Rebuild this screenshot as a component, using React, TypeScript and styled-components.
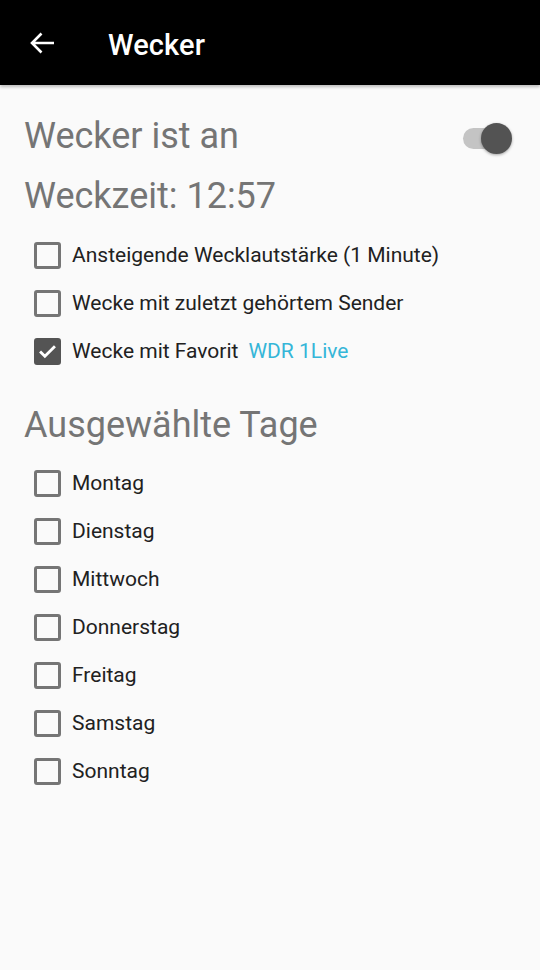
import React from "react";
import styled, { createGlobalStyle } from "styled-components";

const Global = createGlobalStyle`
  html, body {
    margin: 0;
    padding: 0;
    background: #fafafa;
    font-family: Roboto, "Noto Sans", sans-serif;
  }
`;

const Page = styled.div`
  width: 540px;
  height: 970px;
  background: #fafafa;
  overflow: hidden;
`;

const Toolbar = styled.header`
  height: 85px;
  background: #000;
  display: flex;
  align-items: center;
  box-shadow: 0 2px 3px rgba(0, 0, 0, 0.25);
  position: relative;
`;

const BackButton = styled.div`
  width: 84px;
  display: flex;
  align-items: center;
  padding-left: 29px;
  box-sizing: border-box;
  height: 100%;
`;

const Title = styled.h1`
  margin: 4px 0 0 24px;
  color: #fff;
  font-size: 29px;
  font-weight: 500;
  letter-spacing: 0.1px;
`;

const Content = styled.main`
  padding: 29px 28px 0 24px;
`;

const Heading = styled.div<{ $top?: number }>`
  color: #757575;
  font-size: 36px;
  line-height: 44px;
  height: 44px;
  margin-top: ${(p) => p.$top ?? 0}px;
`;

const HeadRow = styled.div`
  display: flex;
  align-items: center;
  justify-content: space-between;
  margin-bottom: 16px;
`;

const Track = styled.div`
  position: relative;
  width: 43px;
  height: 21px;
  border-radius: 11px;
  background: #c4c4c4;
  margin: 4px 6px 0 0;
`;

const Thumb = styled.div`
  position: absolute;
  right: -6px;
  top: -5px;
  width: 31px;
  height: 31px;
  border-radius: 50%;
  background: #535353;
  box-shadow: 0 1px 3px rgba(0, 0, 0, 0.35);
`;

const List = styled.div<{ $top: number }>`
  display: flex;
  flex-direction: column;
  margin-top: ${(p) => p.$top}px;
  padding-left: 10px;
`;

const Row = styled.label`
  display: flex;
  align-items: center;
  height: 48px;
  font-size: 21px;
  color: #212121;
`;

const Box = styled.span<{ $checked?: boolean }>`
  width: 27px;
  height: 27px;
  box-sizing: border-box;
  border-radius: 3px;
  border: 3px solid ${(p) => (p.$checked ? "#545454" : "#757575")};
  background: ${(p) => (p.$checked ? "#545454" : "transparent")};
  display: flex;
  align-items: center;
  justify-content: center;
  margin-right: 11px;
  flex-shrink: 0;
`;

const Favorite = styled.span`
  color: #35b6d8;
  margin-left: 10px;
`;

const Check = ({ checked }: { checked?: boolean }) => (
  <Box $checked={checked}>
    {checked && (
      <svg width="22" height="22" viewBox="0 0 24 24">
        <path d="M3.5 12.5l5.5 5.5L20.5 6.5" fill="none" stroke="#fff" strokeWidth="3.2" />
      </svg>
    )}
  </Box>
);

const days = ["Montag", "Dienstag", "Mittwoch", "Donnerstag", "Freitag", "Samstag", "Sonntag"];

export default function App() {
  return (
    <Page>
      <Global />
      <Toolbar>
        <BackButton>
          <svg width="26" height="24" viewBox="0 0 26 24">
            <path d="M25 12H3M12.5 2.5L3 12l9.5 9.5" fill="none" stroke="#fff" strokeWidth="2.6" />
          </svg>
        </BackButton>
        <Title>Wecker</Title>
      </Toolbar>
      <Content>
        <HeadRow>
          <Heading>Wecker ist an</Heading>
          <Track>
            <Thumb />
          </Track>
        </HeadRow>
        <Heading>Weckzeit: 12:57</Heading>
        <List $top={13}>
          <Row>
            <Check />
            Ansteigende Wecklautstärke (1 Minute)
          </Row>
          <Row>
            <Check />
            Wecke mit zuletzt gehörtem Sender
          </Row>
          <Row>
            <Check checked />
            Wecke mit Favorit
            <Favorite>WDR 1Live</Favorite>
          </Row>
        </List>
        <Heading $top={28}>Ausgewählte Tage</Heading>
        <List $top={12}>
          {days.map((d) => (
            <Row key={d}>
              <Check />
              {d}
            </Row>
          ))}
        </List>
      </Content>
    </Page>
  );
}
